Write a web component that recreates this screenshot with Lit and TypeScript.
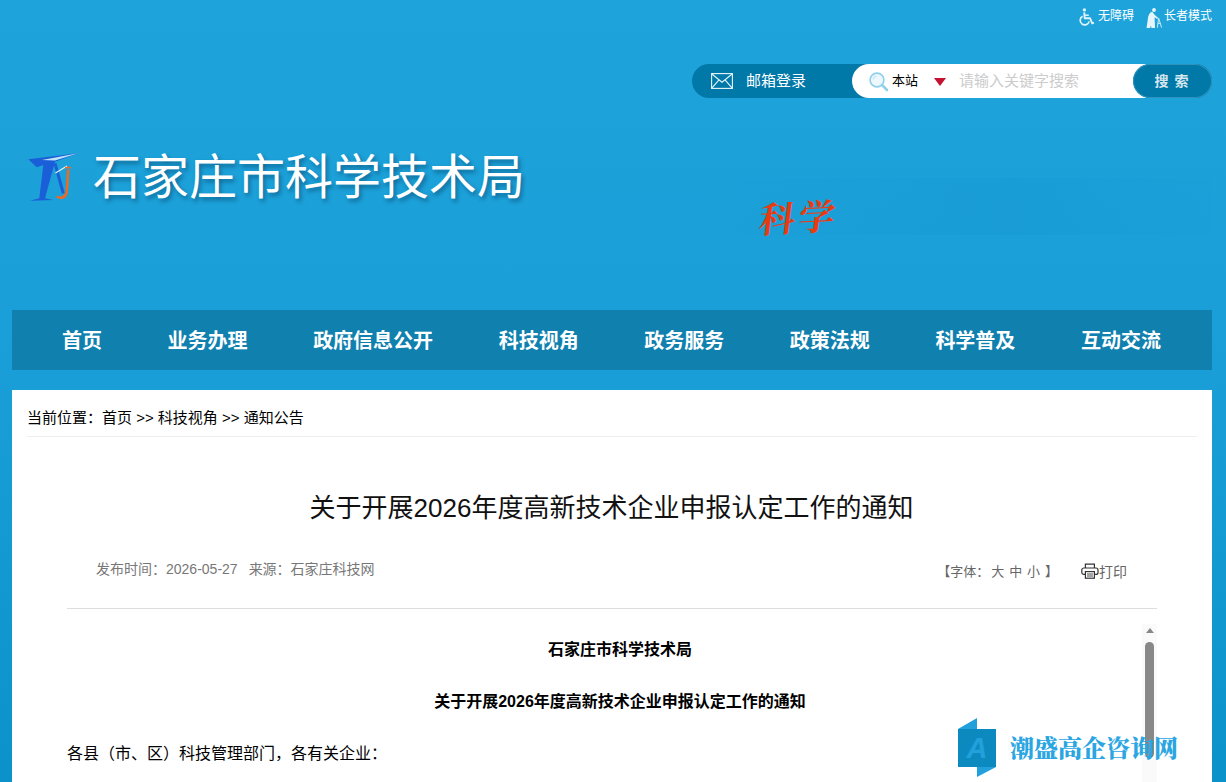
import { LitElement, html, css, svg } from "lit";
import { customElement } from "lit/decorators.js";

const NAV = ["首页", "业务办理", "政府信息公开", "科技视角", "政务服务", "政策法规", "科学普及", "互动交流"];

const wheelchair = svg`<svg width="16" height="19" viewBox="0 0 16 19" fill="none">
  <circle cx="5.4" cy="1.9" r="1.7" fill="#dff3fb"/>
  <path d="M5.2 4.4 5.7 10.2H11L13.2 15.4 15 14.7" stroke="#dff3fb" stroke-width="1.9" stroke-linejoin="round"/>
  <path d="M5.6 7.2H9.8" stroke="#dff3fb" stroke-width="1.5"/>
  <path d="M3.6 8.2A4.6 4.6 0 1 0 10.2 13.4" stroke="#dff3fb" stroke-width="1.7"/>
</svg>`;

const elder = svg`<svg width="17" height="20" viewBox="0 0 17 20" fill="none">
  <circle cx="8" cy="2" r="1.9" fill="#e6f5fb"/>
  <path d="M6.6 4.2C3.6 5 2.8 8 2.6 12L1.4 19.6H3.4L5 13.4 6.2 19.6H8.2L7.8 11 8 7.6 11.6 10.4" stroke="#e6f5fb" stroke-width="1.7" fill="#e6f5fb" stroke-linejoin="round"/>
  <path d="M12.6 10 11.4 19.6M12.6 10 15.6 19.6M12 15.4H14.6" stroke="#cfeaf6" stroke-width="1"/>
</svg>`;

const mail = svg`<svg width="22" height="16" viewBox="0 0 22 16" fill="none" stroke="#e6f5fb" stroke-width="1.1">
  <rect x=".6" y=".6" width="20.8" height="14.8"/>
  <path d="M.6.8 11 9.2 21.4.8M.8 15.2 8 6.8M21.2 15.2 14 6.8"/>
</svg>`;

const loupe = svg`<svg width="20" height="20" viewBox="0 0 20 20" fill="none">
  <circle cx="8" cy="8" r="6.9" fill="#eef8fc" stroke="#8fd0ea" stroke-width="1.6"/>
  <path d="M4.2 7.4A4 4 0 0 1 7.6 4" stroke="#bfe5f3" stroke-width="1.2"/>
  <path d="M13.2 13.2 18 18" stroke="#8fd0ea" stroke-width="2.6" stroke-linecap="round"/>
</svg>`;

const logo = svg`<svg width="58" height="56" viewBox="0 0 58 56">
  <path d="M4.3 11.3 54.3 5.3 31 13.7 21 50.3 29.3 52 6 52.7 15.3 50.3 19.3 17 12.7 19.3Z" fill="#1a5fd8"/>
  <path d="M18 12 54.3 5.3 31 12.6Z" fill="#bfe3f4"/>
  <path d="M31 15.3 39.3 45.3" stroke="#1a5fd8" stroke-width="3" fill="none"/>
  <path d="M31.5 25 43 18" stroke="#e4f3fa" stroke-width="1.2" fill="none"/>
  <path d="M44.3 21.3 42.7 44C42 49.5 37 51 32.7 48.5" fill="none" stroke="#ee6a22" stroke-width="2.6"/>
  <path d="M41 19.6H47" stroke="#ee6a22" stroke-width="1.6"/>
</svg>`;

const printer = svg`<svg width="18" height="16" viewBox="0 0 18 16" fill="none" stroke="#333" stroke-width="1.2">
  <path d="M4.4 5V1.2H13.4V5"/>
  <rect x=".8" y="5" width="16.2" height="6.4" rx="2"/>
  <rect x="4.4" y="8.6" width="9" height="6.6" fill="#fff"/>
  <path d="M6 11H12M6 13H12" stroke-width=".9"/>
</svg>`;

const mark = svg`<svg width="38" height="59" viewBox="0 0 38 59">
  <path d="M0 11 19 0V11ZM19 49H38L19 59Z" fill="#22a0dc"/>
  <rect y="11" width="38" height="38" fill="#0c8abf"/>
  <text x="19" y="40" text-anchor="middle" class="mark-letter">A</text>
</svg>`;

@customElement("app-root")
export class AppRoot extends LitElement {
  static styles = css`
    :host {
      display: block;
      height: 782px;
      overflow: hidden;
      position: relative;
      font-family: "Liberation Sans", "Noto Sans CJK SC", sans-serif;
      background: linear-gradient(180deg, #1ea3da 0, #1a9fd8 300px, #189dd6 420px, #1298d1 600px, #0c92ca 782px);
    }
    .util {
      display: flex;
      justify-content: flex-end;
      gap: 12px;
      height: 64px;
      padding: 7px 14px 0 0;
      box-sizing: border-box;
    }
    .util a {
      display: flex;
      align-items: flex-start;
      gap: 3px;
      height: 20px;
      font-size: 12px;
      line-height: 18px;
      color: #fff;
    }
    .util a + a { gap: 1px; }
    .util svg { display: block; margin-top: 1px; }
    .search {
      display: flex;
      width: 520px;
      height: 34px;
      margin-left: 692px;
      border-radius: 17px;
      background: #0078a8;
    }
    .mailbox {
      display: flex;
      align-items: center;
      width: 160px;
      padding-left: 19px;
      gap: 13px;
      box-sizing: border-box;
      color: #fff;
      font-size: 15px;
    }
    .mailbox svg { display: block; }
    .mailbox span, .field span { padding-bottom: 3px; }
    .field {
      flex: 1;
      display: flex;
      align-items: center;
      background: #fff;
      border-radius: 17px 0 0 17px;
      padding-left: 17px;
      font-size: 13px;
      color: #000;
      position: relative;
    }
    .field svg { display: block; margin-right: 3px; margin-top: 1px; }
    .tri {
      width: 0;
      height: 0;
      margin: 2px 13px 0 16px;
      border-left: 6px solid transparent;
      border-right: 6px solid transparent;
      border-top: 8px solid #c41230;
    }
    .ph { font-size: 15px; color: #ccc; }
    .btn {
      width: 79px;
      margin-left: -19px;
      border-radius: 17px;
      background: #0078a8;
      box-shadow: inset 0 0 0 1px #2e94bd;
      color: #d5e8f0;
      font-size: 14px;
      font-weight: 700;
      letter-spacing: 6px;
      padding: 0 0 2px 4px;
      box-sizing: border-box;
      display: flex;
      align-items: center;
      justify-content: center;
      position: relative;
    }
    .masthead {
      position: relative;
      height: 212px;
      display: flex;
      align-items: flex-start;
      padding: 50px 0 0 24px;
      box-sizing: border-box;
      gap: 11px;
    }
    .masthead svg { display: block; }
    .site-name {
      font-size: 48px;
      line-height: 56px;
      color: #fff;
      margin-top: 2px;
      text-shadow: 2px 3px 4px rgba(0, 40, 70, 0.45);
    }
    .band {
      position: absolute;
      left: 712px;
      top: 80px;
      width: 500px;
      height: 57px;
      background: linear-gradient(90deg, rgba(20, 150, 205, 0.03), rgba(20, 145, 205, 0.22) 60%, rgba(20, 150, 205, 0.06));
    }
    .slogan {
      position: absolute;
      left: 760px;
      top: 96px;
      font-family: "Noto Serif CJK SC", "Noto Sans CJK SC", serif;
      font-size: 36px;
      line-height: 44px;
      letter-spacing: 3px;
      color: #e83c10;
      font-weight: 700;
      transform: skewX(-10deg) rotate(-3deg);
    }
    nav {
      display: flex;
      justify-content: space-between;
      align-items: center;
      height: 60px;
      margin: 0 14px 0 12px;
      padding: 0 51px 2px 50px;
      box-sizing: border-box;
      background: #1080ae;
      color: #fff;
      font-size: 20px;
      font-weight: 700;
    }
    .panel {
      margin: 20px 14px 0 12px;
      padding: 0 15px;
      background: #fff;
      height: 420px;
      box-sizing: border-box;
    }
    .crumb {
      height: 47px;
      display: flex;
      align-items: center;
      padding-top: 6px;
      box-sizing: border-box;
      border-bottom: 1px solid #eee;
      font-size: 15px;
      color: #000;
      white-space: pre;
    }
    .body { padding: 0 40px; }
    h1 {
      margin: 0;
      padding: 53px 1px 0 0;
      text-align: center;
      font-size: 26px;
      line-height: 36px;
      font-weight: 400;
      color: #111;
    }
    .meta {
      display: flex;
      justify-content: space-between;
      align-items: center;
      margin-top: 28px;
      height: 28px;
      padding: 0 30px 0 29px;
      font-size: 14px;
      color: #777;
    }
    .meta .src { margin-left: 11px; }
    .tools {
      display: flex;
      align-items: center;
      margin-top: 5px;
      font-size: 13px;
      color: #666;
      white-space: pre;
      word-spacing: 1.3px;
    }
    .sizes { margin-left: 2px; }
    .print {
      display: flex;
      align-items: center;
      margin-left: 23px;
      font-size: 14px;
    }
    .print svg { display: block; }
    .rule { border-top: 1px solid #ddd; margin-top: 26px; }
    .doc {
      display: flex;
      height: 300px;
      margin-top: 15px;
    }
    .article { flex: 1; font-size: 16px; color: #000; }
    .article p { margin: 0; line-height: 52px; }
    .article .center { text-align: center; font-weight: 700; padding-left: 31px; }
    .scroll {
      width: 15px;
      background: #fafafa;
      display: flex;
      flex-direction: column;
      align-items: center;
    }
    .arrow {
      margin-top: 4px;
      width: 0;
      height: 0;
      border-left: 4.5px solid transparent;
      border-right: 4.5px solid transparent;
      border-bottom: 5px solid #888;
    }
    .thumb {
      width: 9px;
      height: 116px;
      margin-top: 9px;
      border-radius: 5px;
      background: #888;
    }
    .mark {
      position: absolute;
      left: 958px;
      top: 718px;
      display: flex;
      gap: 14px;
      align-items: flex-start;
    }
    .mark svg { display: block; }
    .mark-letter {
      font: italic 700 29px "Liberation Sans", sans-serif;
      fill: #22a0dc;
    }
    .mark-name {
      margin-top: 14px;
      font-family: "Noto Serif CJK SC", "Noto Sans CJK SC", serif;
      font-size: 24px;
      line-height: 30px;
      font-weight: 900;
      color: #2ba6e2;
      white-space: nowrap;
    }
  `;

  render() {
    return html`
      <div class="util">
        <a>${wheelchair}无障碍</a>
        <a>${elder}长者模式</a>
      </div>
      <div class="search">
        <div class="mailbox">${mail}<span>邮箱登录</span></div>
        <div class="field">${loupe}<span>本站</span><i class="tri"></i><span class="ph">请输入关键字搜索</span></div>
        <div class="btn">搜索</div>
      </div>
      <header class="masthead">
        ${logo}
        <div class="site-name">石家庄市科学技术局</div>
        <div class="band"></div>
        <div class="slogan">科学</div>
      </header>
      <nav>${NAV.map((n) => html`<span>${n}</span>`)}</nav>
      <main class="panel">
        <div class="crumb">当前位置：首页 &gt;&gt; 科技视角 &gt;&gt; 通知公告</div>
        <div class="body">
          <h1>关于开展2026年度高新技术企业申报认定工作的通知</h1>
          <div class="meta">
            <div>发布时间：2026-05-27<span class="src">来源：石家庄科技网</span></div>
            <div class="tools">【字体：<span class="sizes">大 中 小 】</span><span class="print">${printer}打印</span></div>
          </div>
          <div class="rule"></div>
          <div class="doc">
            <div class="article">
              <p class="center">石家庄市科学技术局</p>
              <p class="center">关于开展2026年度高新技术企业申报认定工作的通知</p>
              <p>各县（市、区）科技管理部门，各有关企业：</p>
            </div>
            <div class="scroll"><i class="arrow"></i><i class="thumb"></i></div>
          </div>
        </div>
      </main>
      <div class="mark">${mark}<div class="mark-name">潮盛高企咨询网</div></div>
    `;
  }
}
